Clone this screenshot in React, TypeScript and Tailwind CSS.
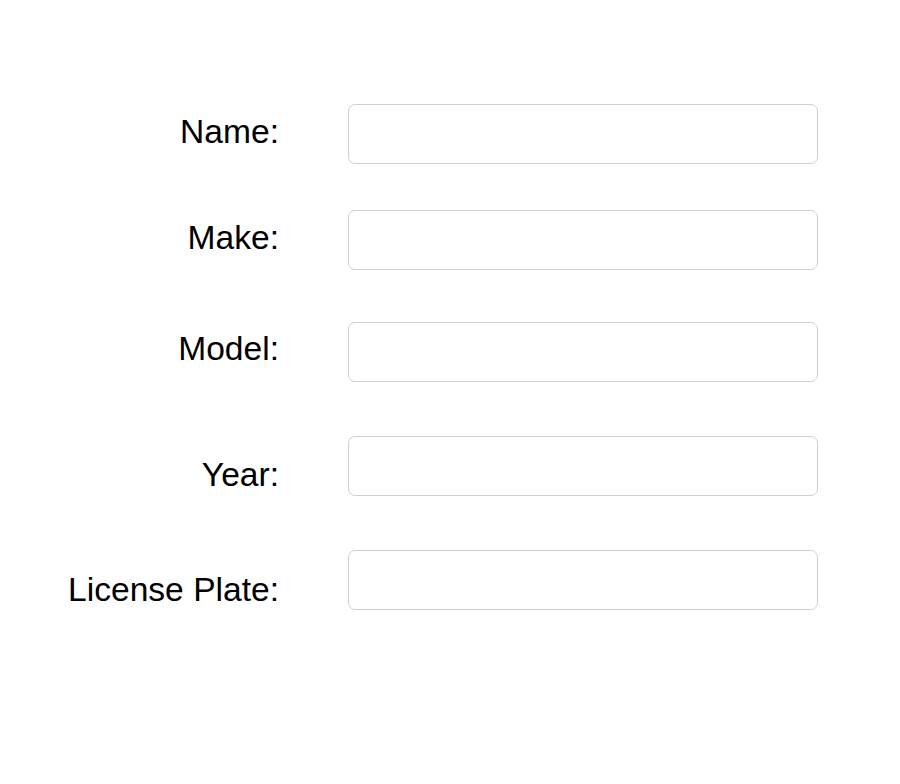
const fields = [
  { label: 'Name:', rowTop: 'mt-[104px]', labelTop: 'mt-[8px]' },
  { label: 'Make:', rowTop: 'mt-[46px]', labelTop: 'mt-[8px]' },
  { label: 'Model:', rowTop: 'mt-[52px]', labelTop: 'mt-[7px]' },
  { label: 'Year:', rowTop: 'mt-[54px]', labelTop: 'mt-[19px]' },
  { label: 'License Plate:', rowTop: 'mt-[54px]', labelTop: 'mt-[20px]' },
]

const App = () => {
  return (
    <div
      className="w-[900px] h-[784px] bg-white text-black overflow-hidden"
      style={{ fontFamily: '"Liberation Sans", Arial, sans-serif' }}
    >
      {fields.map((field) => (
        <div key={field.label} className={`flex items-start ${field.rowTop}`}>
          <label
            className={`w-[279px] text-right text-[33.6px] leading-[40px] whitespace-nowrap ${field.labelTop}`}
          >
            {field.label}
          </label>
          <input
            type="text"
            className="ml-[69px] w-[470px] h-[60px] rounded-[7px] border border-[#cfcfcf] bg-white outline-none"
          />
        </div>
      ))}
    </div>
  )
}

export default App
